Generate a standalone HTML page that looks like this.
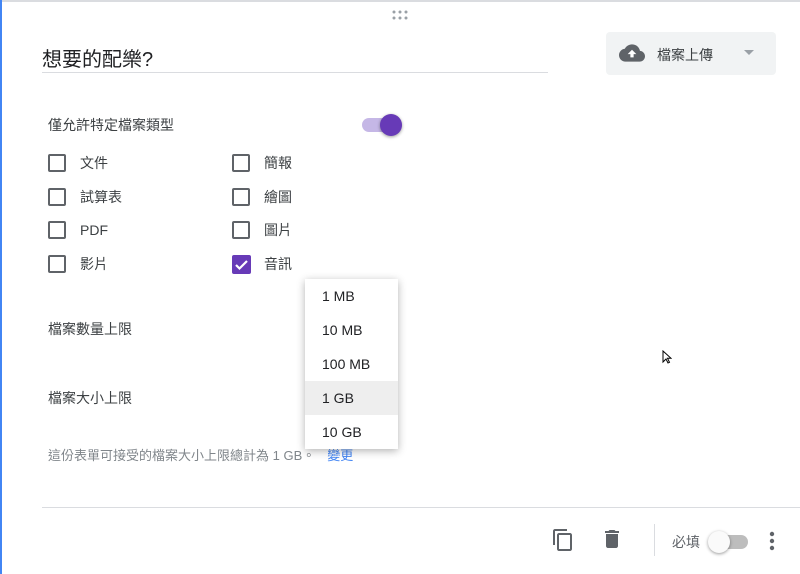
<!DOCTYPE html>
<html><head><meta charset="utf-8"><style>
*{margin:0;padding:0;box-sizing:border-box}
body{width:800px;height:574px;background:#fff;position:relative;overflow:hidden;font-family:"Liberation Sans","Noto Sans CJK TC",sans-serif;color:#202124}
.a{position:absolute}
.cb{position:absolute;width:18px;height:18px;border:2px solid #5f6368;border-radius:2px}
.lb{position:absolute;font-size:14px;color:#3c4043;line-height:18px}
.it{position:absolute;left:0;width:93px;height:34px;line-height:34px;padding-left:17px;font-size:14px;color:#202124}
</style></head><body>
<div class="a" style="left:0;top:0;width:800px;height:2px;background:#dadce0"></div>
<div class="a" style="left:0;top:0;width:2px;height:574px;background:#4285f4"></div>
<svg class="a" style="left:392px;top:10px" width="16" height="10"><g fill="#9aa0a6"><circle cx="2" cy="2" r="1.5"/><circle cx="8" cy="2" r="1.5"/><circle cx="14" cy="2" r="1.5"/><circle cx="2" cy="8" r="1.5"/><circle cx="8" cy="8" r="1.5"/><circle cx="14" cy="8" r="1.5"/></g></svg>
<div class="a" style="left:42px;top:47px;font-size:20px;line-height:26px;color:#202124">想要的配樂?</div>
<div class="a" style="left:42px;top:72px;width:506px;height:1px;background:#dadce0"></div>
<div class="a" style="left:606px;top:32px;width:170px;height:43px;background:#f1f3f4;border-radius:4px"></div>
<svg class="a" style="left:619px;top:43px" width="26" height="20" viewBox="0 0 24 18"><path d="M19.35 7.04A7.49 7.49 0 0 0 12 1C9.11 1 6.6 2.64 5.35 5.04A5.994 5.994 0 0 0 0 11c0 3.31 2.69 6 6 6h13c2.76 0 5-2.24 5-5 0-2.64-2.05-4.780-4.65-4.96z" fill="#5f6368"/><path d="M12 6l-4 4h2.5v3h3v-3H16z" fill="#fff"/></svg>
<div class="a" style="left:657px;top:45px;font-size:14px;color:#3c4043">檔案上傳</div>
<div class="a" style="left:744px;top:50px;width:0;height:0;border-left:5px solid transparent;border-right:5px solid transparent;border-top:5px solid #9aa0a6"></div>
<div class="lb" style="left:48px;top:116px">僅允許特定檔案類型</div>
<div class="a" style="left:362px;top:118px;width:36px;height:14px;border-radius:7px;background:#c5b7e6"></div>
<div class="a" style="left:380px;top:114px;width:22px;height:22px;border-radius:50%;background:#673ab7;box-shadow:0 1px 3px rgba(0,0,0,.4)"></div>
<div class="cb" style="left:48px;top:154px"></div><div class="lb" style="left:80px;top:154px">文件</div>
<div class="cb" style="left:232px;top:154px"></div><div class="lb" style="left:264px;top:154px">簡報</div>
<div class="cb" style="left:48px;top:188px"></div><div class="lb" style="left:80px;top:188px">試算表</div>
<div class="cb" style="left:232px;top:188px"></div><div class="lb" style="left:264px;top:188px">繪圖</div>
<div class="cb" style="left:48px;top:221px"></div><div class="lb" style="left:80px;top:221px">PDF</div>
<div class="cb" style="left:232px;top:221px"></div><div class="lb" style="left:264px;top:221px">圖片</div>
<div class="cb" style="left:48px;top:255px"></div><div class="lb" style="left:80px;top:255px">影片</div>
<div class="a" style="left:232px;top:255px;width:19px;height:19px;background:#673ab7;border-radius:2px"></div>
<svg class="a" style="left:232px;top:255px" width="19" height="19"><path d="M4 10l3.5 3.5L15 6" stroke="#fff" stroke-width="2.2" fill="none"/></svg>
<div class="lb" style="left:264px;top:255px">音訊</div>
<div class="lb" style="left:48px;top:320px">檔案數量上限</div>
<div class="lb" style="left:48px;top:389px">檔案大小上限</div>
<div class="a" style="left:48px;top:445px;font-size:13px;color:#80868b;white-space:nowrap">這份表單可接受的檔案大小上限總計為 1 GB。<span style="color:#4285f4;margin-left:12px">變更</span></div>
<div class="a" style="left:305px;top:279px;width:93px;height:170px;background:#fff;box-shadow:0 2px 8px rgba(0,0,0,.3)">
<div class="it" style="top:0">1 MB</div>
<div class="it" style="top:34px">10 MB</div>
<div class="it" style="top:68px">100 MB</div>
<div class="it" style="top:102px;background:#eeeeee">1 GB</div>
<div class="it" style="top:136px">10 GB</div>
</div>
<svg class="a" style="left:662px;top:350px" width="10" height="15"><path d="M1 1v11l3-3 2 4 1.5-.7-2-4H9z" fill="#fff" stroke="#000" stroke-width="1"/></svg>
<div class="a" style="left:42px;top:507px;width:758px;height:1px;background:#dadce0"></div>
<svg class="a" style="left:551px;top:528px" width="24" height="24" viewBox="0 0 24 24"><path d="M16 1H4c-1.1 0-2 .9-2 2v14h2V3h12V1zm3 4H8c-1.1 0-2 .9-2 2v14c0 1.1.9 2 2 2h11c1.1 0 2-.9 2-2V7c0-1.1-.9-2-2-2zm0 16H8V7h11v14z" fill="#5f6368"/></svg>
<svg class="a" style="left:600px;top:527px" width="24" height="24" viewBox="0 0 24 24"><path d="M6 19c0 1.1.9 2 2 2h8c1.1 0 2-.9 2-2V7H6v12zM19 4h-3.5l-1-1h-5l-1 1H5v2h14V4z" fill="#5f6368"/></svg>
<div class="a" style="left:654px;top:524px;width:1px;height:32px;background:#dadce0"></div>
<div class="a" style="left:672px;top:532px;font-size:14px;color:#5f6368">必填</div>
<div class="a" style="left:712px;top:535px;width:36px;height:14px;border-radius:7px;background:#bdbdbd"></div>
<div class="a" style="left:708px;top:531px;width:22px;height:22px;border-radius:50%;background:#fafafa;box-shadow:0 1px 3px rgba(0,0,0,.4)"></div>
<svg class="a" style="left:768px;top:530px" width="8" height="22"><g fill="#5f6368"><circle cx="4" cy="4" r="2.2"/><circle cx="4" cy="11" r="2.2"/><circle cx="4" cy="18" r="2.2"/></g></svg>
</body></html>
